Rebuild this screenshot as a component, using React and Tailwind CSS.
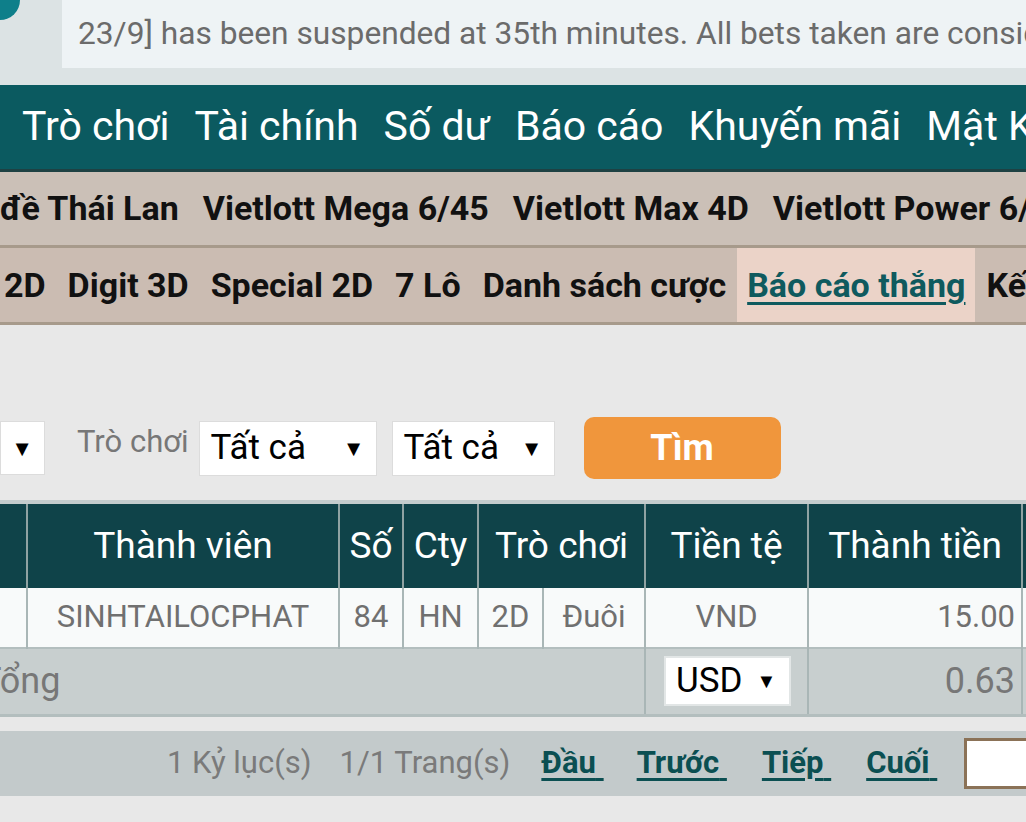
import React from "react";

const topNav = ["Trò chơi", "Tài chính", "Số dư", "Báo cáo", "Khuyến mãi", "Mật Khẩu"];
const gameNav = ["đề Thái Lan", "Vietlott Mega 6/45", "Vietlott Max 4D", "Vietlott Power 6/55"];
const subNav = ["2D", "Digit 3D", "Special 2D", "7 Lô", "Danh sách cược", "Báo cáo thắng", "Kết quả"];
const pageLinks = [
    { t: "Đầu", ml: "ml-[31px]" },
    { t: "Trước", ml: "ml-[33px]" },
    { t: "Tiếp", ml: "ml-[35px]" },
    { t: "Cuối", ml: "ml-[35px]" },
];

function FakeSelect({ label, className }) {
    return (
        <div className={"flex items-center justify-between bg-white border border-[#dcdcdc] text-black " + className}>
            <span>{label}</span>
            <span className="text-[22px]">▼</span>
        </div>
    );
}

export default function App() {
    return (
        <div className="w-[1026px] h-[822px] overflow-hidden bg-[#e8e8e8] font-['Roboto',sans-serif]">
            {/* notice */}
            <div className="relative h-[85px] bg-[#dce3e4] overflow-hidden">
                <div className="absolute -left-[20px] -top-[22px] w-[40px] h-[42px] rounded-full bg-[#0e7f8a]" />
                <div className="ml-[62px] h-[68px] bg-[#eef3f5] flex items-center pl-[16px] whitespace-nowrap overflow-hidden">
                    <span className="text-[31.7px] text-[#6b6b6b]">
                        23/9] has been suspended at 35th minutes. All bets taken are considered
                    </span>
                </div>
            </div>

            {/* main nav */}
            <div className="h-[87px] bg-[#0b5a60] border-b-[3px] border-[#1e4143] flex items-center whitespace-nowrap overflow-hidden pl-[9.5px]">
                {topNav.map((t) => (
                    <span key={t} className="px-[12.5px] text-[41px] text-white">{t}</span>
                ))}
            </div>

            {/* game nav */}
            <div className="h-[76px] bg-[#cbc0b7] border-b-[3px] border-[#a79a8b] flex items-center whitespace-nowrap overflow-hidden -ml-[12px]">
                {gameNav.map((t) => (
                    <span key={t} className="px-[12px] text-[34px] font-bold text-[#111]">{t}</span>
                ))}
            </div>

            {/* sub nav */}
            <div className="h-[77px] bg-[#cbbcb2] border-b-[3px] border-[#a79a8b] flex items-stretch whitespace-nowrap overflow-hidden -ml-[7px]">
                {subNav.map((t) =>
                    t === "Báo cáo thắng" ? (
                        <span key={t} className="px-[10px] flex items-center bg-[#ebd3c8] text-[34px] font-bold text-[#0f5a5e] underline underline-offset-[5px] decoration-[3px]">{t}</span>
                    ) : (
                        <span key={t} className="px-[11px] flex items-center text-[34px] font-bold text-[#111]">{t}</span>
                    )
                )}
            </div>

            {/* filters */}
            <div className="h-[175px] flex items-end pb-[21px] whitespace-nowrap">
                <FakeSelect label="" className="w-[45px] h-[54px] pr-[11px] mb-[4px]" />
                <span className="ml-[32px] mr-[10px] text-[31px] text-[#777] mb-[14px]">Trò chơi</span>
                <FakeSelect label="Tất cả" className="w-[178px] h-[55px] px-[11px] mb-[3px] text-[35px]" />
                <FakeSelect label="Tất cả" className="ml-[15px] w-[163px] h-[55px] px-[11px] mb-[3px] text-[35px]" />
                <button className="ml-[29px] w-[197px] h-[62px] rounded-[10px] bg-[#f0963c] text-white font-bold text-[36px]">Tìm</button>
            </div>

            {/* table */}
            <div className="border-t-[4px] border-[#c4cdcd] -ml-[33px] w-[1160px]">
                <table className="table-fixed border-collapse w-full">
                    <colgroup>
                        <col className="w-[60px]" />
                        <col className="w-[312px]" />
                        <col className="w-[64px]" />
                        <col className="w-[75px]" />
                        <col className="w-[65px]" />
                        <col className="w-[102px]" />
                        <col className="w-[163px]" />
                        <col className="w-[214px]" />
                        <col className="w-[105px]" />
                    </colgroup>
                    <thead>
                        <tr className="h-[84px] bg-[#0f4349] text-white text-[37px]">
                            <th className="border-r-[2px] border-[#8fa2a2] font-normal" />
                            <th className="border-r-[2px] border-[#8fa2a2] font-normal">Thành viên</th>
                            <th className="border-r-[2px] border-[#8fa2a2] font-normal">Số</th>
                            <th className="border-r-[2px] border-[#8fa2a2] font-normal">Cty</th>
                            <th colSpan={2} className="border-r-[2px] border-[#8fa2a2] font-normal">Trò chơi</th>
                            <th className="border-r-[2px] border-[#8fa2a2] font-normal">Tiền tệ</th>
                            <th className="border-r-[2px] border-[#8fa2a2] font-normal">Thành tiền</th>
                            <th className="font-normal" />
                        </tr>
                    </thead>
                    <tbody>
                        <tr className="h-[60px] bg-[#f8fafa] text-[31px] text-[#707070]">
                            <td className="border-r-[2px] border-[#a9b6b6]" />
                            <td className="border-r-[2px] border-[#a9b6b6] text-center">SINHTAILOCPHAT</td>
                            <td className="border-r-[2px] border-[#a9b6b6] text-center">84</td>
                            <td className="border-r-[2px] border-[#a9b6b6] text-center">HN</td>
                            <td className="border-r-[2px] border-[#a9b6b6] text-center">2D</td>
                            <td className="border-r-[2px] border-[#a9b6b6] text-center">Đuôi</td>
                            <td className="border-r-[2px] border-[#a9b6b6] text-center">VND</td>
                            <td className="border-r-[2px] border-[#a9b6b6] text-right pr-[6px]">15.00</td>
                            <td />
                        </tr>
                        <tr className="h-[67px] bg-[#c8cfcf] text-[36px] text-[#777] border-t-[2px] border-b-[3px] border-[#b3bebe]">
                            <td colSpan={6} className="border-r-[2px] border-[#a9b6b6] pl-[13px]">Tổng</td>
                            <td className="border-r-[2px] border-[#a9b6b6]">
                                <div className="ml-[18px] w-[127px] h-[50px] bg-white border-[2px] border-[#e2e6e6] flex items-center pl-[10px] gap-[14px] text-black text-[35px]">
                                    <span>USD</span>
                                    <span className="text-[20px]">▼</span>
                                </div>
                            </td>
                            <td className="border-r-[2px] border-[#a9b6b6] text-right pr-[6px]">0.63</td>
                            <td />
                        </tr>
                    </tbody>
                </table>
            </div>

            {/* pagination */}
            <div className="mt-[14px] h-[65px] bg-[#c3cacb] flex items-center whitespace-nowrap text-[31px]">
                <span className="ml-[167px] text-[#7a7a7a]">1 Kỷ lục(s)</span>
                <span className="ml-[28px] text-[#7a7a7a]">1/1 Trang(s)</span>
                {pageLinks.map(({ t, ml }) => (
                    <span key={t} className={ml + " font-bold text-[#0b4f52] underline underline-offset-[5px]"}>
                        {t}{"\u00a0"}
                    </span>
                ))}
                <div className="ml-[27px] w-[80px] h-[51px] bg-white border-[3px] border-[#8b7257] shrink-0" />
            </div>
        </div>
    );
}
